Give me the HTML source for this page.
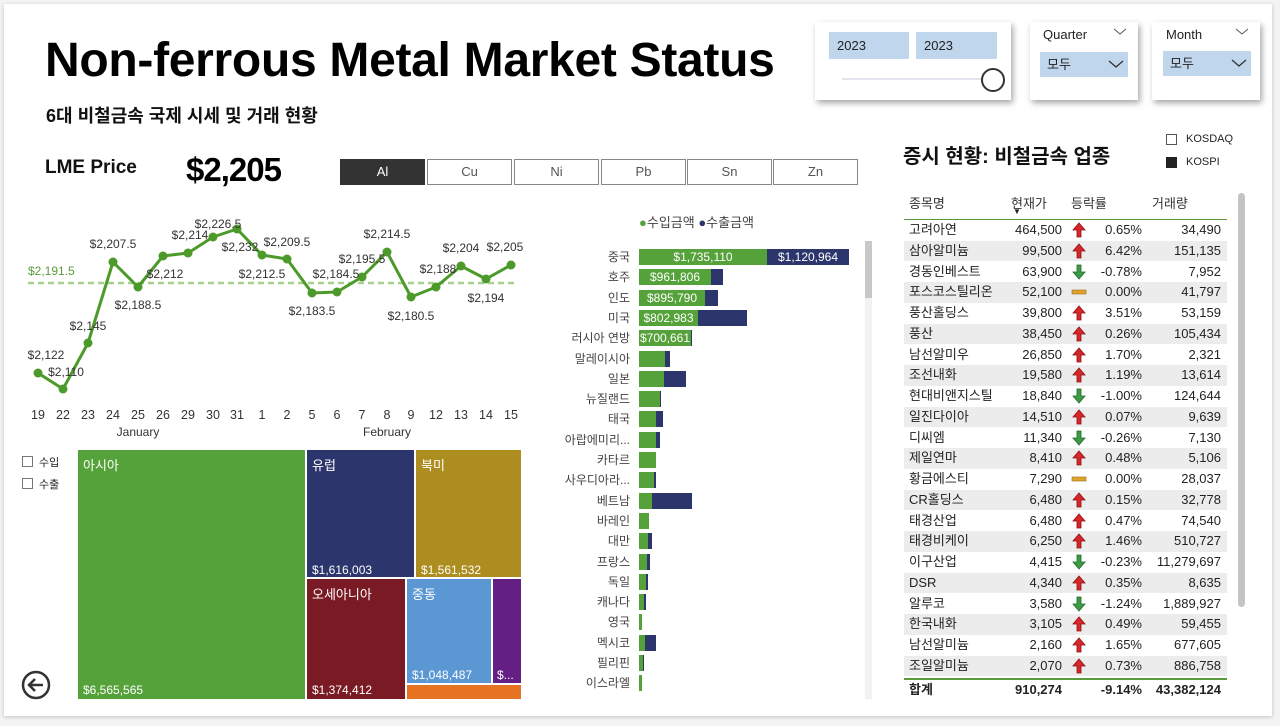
<!DOCTYPE html>
<html><head><meta charset="utf-8">
<style>
*{margin:0;padding:0;box-sizing:border-box}
body{width:1280px;height:726px;background:#f3f3f3;font-family:"Liberation Sans","Noto Sans CJK KR",sans-serif;position:relative;overflow:hidden;color:#222}
.a{position:absolute}
.card{left:4px;top:4px;width:1268px;height:712px;background:#fff;box-shadow:0 1px 4px rgba(0,0,0,.2)}
.btn{top:159px;height:26px;width:85px;border:1px solid #888;background:#fff;font-size:13px;color:#555;text-align:center;line-height:24px}
.sl{background:#fff;box-shadow:2px 3px 6px rgba(0,0,0,.35)}
.bl{font-size:12px;color:#444;text-align:right;width:120px;left:510px;line-height:16px}
.tr{left:904px;width:323px;height:20.7px;font-size:13px;color:#222}
.tr span{position:absolute;top:0;line-height:20px;height:20px}
.tm{color:#fff;font-size:13px}
</style></head><body>
<div class="a card"></div>

<div class="a" style="left:45px;top:33px;font-size:48px;font-weight:bold;color:#000;letter-spacing:-0.3px;white-space:nowrap">Non-ferrous Metal Market Status</div>
<div class="a" style="left:46px;top:102px;font-size:18px;font-weight:bold;color:#111">6대 비철금속 국제 시세 및 거래 현황</div>
<div class="a" style="left:45px;top:157px;font-size:19px;font-weight:bold;color:#111">LME Price</div>
<div class="a" style="left:186px;top:151px;font-size:33px;font-weight:bold;color:#000;letter-spacing:-1px">$2,205</div>

<div class="a btn" style="left:340px;background:#333;color:#fff;border-color:#333">Al</div>
<div class="a btn" style="left:427px">Cu</div>
<div class="a btn" style="left:514px">Ni</div>
<div class="a btn" style="left:601px">Pb</div>
<div class="a btn" style="left:687px">Sn</div>
<div class="a btn" style="left:773px">Zn</div>

<!-- slicers -->
<div class="a sl" style="left:815px;top:22px;width:196px;height:78px"></div>
<div class="a" style="left:829px;top:32px;width:80px;height:27px;background:#c0d6ec;font-size:13px;line-height:27px;padding-left:8px">2023</div>
<div class="a" style="left:916px;top:32px;width:81px;height:27px;background:#c0d6ec;font-size:13px;line-height:27px;padding-left:8px">2023</div>
<div class="a" style="left:842px;top:78px;width:140px;height:2px;background:#e4e4f0"></div>
<div class="a" style="left:981px;top:68px;width:24px;height:24px;border:2px solid #333;border-radius:50%;background:#fff"></div>

<div class="a sl" style="left:1030px;top:22px;width:108px;height:78px"></div>
<div class="a" style="left:1043px;top:27px;font-size:13px">Quarter</div>
<svg class="a" style="left:1113px;top:28px" width="14" height="8"><path d="M1 1l6 5 6-5" fill="none" stroke="#555" stroke-width="1"/></svg>
<div class="a" style="left:1040px;top:52px;width:88px;height:25px;background:#c0d6ec;font-size:13px;line-height:25px;padding-left:7px">모두</div>
<svg class="a" style="left:1108px;top:60px" width="16" height="9"><path d="M1 1l7 6 7-6" fill="none" stroke="#333" stroke-width="1.3"/></svg>

<div class="a sl" style="left:1152px;top:22px;width:108px;height:78px"></div>
<div class="a" style="left:1166px;top:27px;font-size:13px">Month</div>
<svg class="a" style="left:1235px;top:28px" width="14" height="8"><path d="M1 1l6 5 6-5" fill="none" stroke="#555" stroke-width="1"/></svg>
<div class="a" style="left:1163px;top:51px;width:88px;height:25px;background:#c0d6ec;font-size:13px;line-height:25px;padding-left:7px">모두</div>
<svg class="a" style="left:1231px;top:59px" width="16" height="9"><path d="M1 1l7 6 7-6" fill="none" stroke="#333" stroke-width="1.3"/></svg>

<!-- line chart -->
<svg class="a" style="left:0;top:190px" width="540" height="260" viewBox="0 190 540 260" font-family="Liberation Sans, sans-serif" font-size="12" fill="#333">
<line x1="28" y1="283" x2="518" y2="283" stroke="#a8d08d" stroke-width="2.5" stroke-dasharray="6,4"/>
<text x="28" y="275" fill="#5a9a3a">$2,191.5</text>
<polyline fill="none" stroke="#4c9a2a" stroke-width="3" stroke-linejoin="round" points="38,373 63,389 88,343 113,262 138,287 163,256 188,253 213,237 237,229 262,255 287,259 312,293 337,292 362,277 387,252 411,297 436,287 461,266 486,279 511,265"/>
<g fill="#4c9a2a">
<circle cx="38" cy="373" r="4.5"/><circle cx="63" cy="389" r="4.5"/><circle cx="88" cy="343" r="4.5"/><circle cx="113" cy="262" r="4.5"/><circle cx="138" cy="287" r="4.5"/><circle cx="163" cy="256" r="4.5"/><circle cx="188" cy="253" r="4.5"/><circle cx="213" cy="237" r="4.5"/><circle cx="237" cy="229" r="4.5"/><circle cx="262" cy="255" r="4.5"/><circle cx="287" cy="259" r="4.5"/><circle cx="312" cy="293" r="4.5"/><circle cx="337" cy="292" r="4.5"/><circle cx="362" cy="277" r="4.5"/><circle cx="387" cy="252" r="4.5"/><circle cx="411" cy="297" r="4.5"/><circle cx="436" cy="287" r="4.5"/><circle cx="461" cy="266" r="4.5"/><circle cx="486" cy="279" r="4.5"/><circle cx="511" cy="265" r="4.5"/>
</g>
<g text-anchor="middle">
<text x="46" y="359">$2,122</text><text x="66" y="376">$2,110</text><text x="88" y="330">$2,145</text><text x="113" y="248">$2,207.5</text><text x="138" y="309">$2,188.5</text><text x="165" y="278">$2,212</text><text x="190" y="239">$2,214</text><text x="218" y="228">$2,226.5</text><text x="240" y="251">$2,232</text><text x="262" y="278">$2,212.5</text><text x="287" y="246">$2,209.5</text><text x="312" y="315">$2,183.5</text><text x="336" y="278">$2,184.5</text><text x="362" y="263">$2,195.5</text><text x="387" y="238">$2,214.5</text><text x="411" y="320">$2,180.5</text><text x="438" y="273">$2,188</text><text x="461" y="252">$2,204</text><text x="486" y="302">$2,194</text><text x="505" y="251">$2,205</text>
</g>
<g text-anchor="middle" font-size="12.5">
<text x="38" y="419">19</text><text x="63" y="419">22</text><text x="88" y="419">23</text><text x="113" y="419">24</text><text x="138" y="419">25</text><text x="163" y="419">26</text><text x="188" y="419">29</text><text x="213" y="419">30</text><text x="237" y="419">31</text><text x="262" y="419">1</text><text x="287" y="419">2</text><text x="312" y="419">5</text><text x="337" y="419">6</text><text x="362" y="419">7</text><text x="387" y="419">8</text><text x="411" y="419">9</text><text x="436" y="419">12</text><text x="461" y="419">13</text><text x="486" y="419">14</text><text x="511" y="419">15</text>
<text x="138" y="436" font-size="12">January</text><text x="387" y="436" font-size="12">February</text>
</g>
</svg>

<!-- treemap -->
<div class="a" style="left:22px;top:456px;width:11px;height:11px;border:1px solid #777"></div>
<div class="a" style="left:39px;top:454px;font-size:11px">수입</div>
<div class="a" style="left:22px;top:478px;width:11px;height:11px;border:1px solid #777"></div>
<div class="a" style="left:39px;top:476px;font-size:11px">수출</div>
<div class="a" style="left:78px;top:450px;width:227px;height:249px;background:#56a23a"></div>
<div class="a tm" style="left:83px;top:455px">아시아</div><div class="a tm" style="left:83px;top:683px;font-size:12px">$6,565,565</div>
<div class="a" style="left:307px;top:450px;width:107px;height:127px;background:#2c366c"></div>
<div class="a tm" style="left:312px;top:455px">유럽</div><div class="a tm" style="left:312px;top:563px;font-size:12px">$1,616,003</div>
<div class="a" style="left:416px;top:450px;width:105px;height:127px;background:#ad8d1f"></div>
<div class="a tm" style="left:421px;top:455px">북미</div><div class="a tm" style="left:421px;top:563px;font-size:12px">$1,561,532</div>
<div class="a" style="left:307px;top:579px;width:98px;height:120px;background:#7a1a24"></div>
<div class="a tm" style="left:312px;top:584px">오세아니아</div><div class="a tm" style="left:312px;top:683px;font-size:12px">$1,374,412</div>
<div class="a" style="left:407px;top:579px;width:84px;height:104px;background:#5b97d2"></div>
<div class="a tm" style="left:412px;top:584px">중동</div><div class="a tm" style="left:412px;top:668px;font-size:12px">$1,048,487</div>
<div class="a" style="left:493px;top:579px;width:28px;height:104px;background:#631f84"></div>
<div class="a tm" style="left:497px;top:668px;font-size:12px">$...</div>
<div class="a" style="left:407px;top:685px;width:114px;height:14px;background:#e57321"></div>
<svg class="a" style="left:21px;top:670px" width="30" height="30"><circle cx="15" cy="15" r="13" fill="none" stroke="#333" stroke-width="2.5"/><path d="M22 15H9M14 9l-6 6 6 6" fill="none" stroke="#333" stroke-width="2.5"/></svg>

<!-- bar chart -->
<div class="a" style="left:639px;top:212px;font-size:13px;color:#444"><span style="color:#56a23a">●</span>수입금액 <span style="color:#2c366c">●</span>수출금액</div>
<div class="a" style="left:865px;top:241px;width:7px;height:458px;background:#f2f2f2"></div>
<div class="a" style="left:865px;top:241px;width:7px;height:57px;background:#c8c8c8"></div>
<div id="bars"></div>

<!-- right: table -->
<div class="a" style="left:903px;top:140px;font-size:20px;font-weight:bold;color:#111">증시 현황: 비철금속 업종</div>
<div class="a" style="left:1166px;top:134px;width:11px;height:11px;border:1px solid #555"></div>
<div class="a" style="left:1186px;top:133px;font-size:11px">KOSDAQ</div>
<div class="a" style="left:1166px;top:157px;width:11px;height:11px;background:#222"></div>
<div class="a" style="left:1186px;top:156px;font-size:11px">KOSPI</div>
<div class="a" style="left:909px;top:193px;font-size:13px;color:#333">종목명</div>
<div class="a" style="left:1011px;top:193px;font-size:13px;color:#333">현재가</div>
<div class="a" style="left:1013px;top:207px;font-size:8px">▼</div>
<div class="a" style="left:1071px;top:193px;font-size:13px;color:#333">등락률</div>
<div class="a" style="left:1152px;top:193px;font-size:13px;color:#333">거래량</div>
<div class="a" style="left:904px;top:219px;width:323px;height:1.5px;background:#5a9a3a"></div>
<div id="tbl"></div>
<div class="a" style="left:904px;top:678px;width:323px;height:1.5px;background:#5a9a3a"></div>
<div class="a" style="left:909px;top:682px;font-size:13px;font-weight:bold;line-height:16px">합계</div>
<div class="a" style="left:980px;width:82px;text-align:right;top:682px;font-size:13px;font-weight:bold;line-height:16px">910,274</div>
<div class="a" style="left:1080px;width:62px;text-align:right;top:682px;font-size:13px;font-weight:bold;line-height:16px">-9.14%</div>
<div class="a" style="left:1140px;width:81px;text-align:right;top:682px;font-size:13px;font-weight:bold;line-height:16px">43,382,124</div>
<div class="a" style="left:1238px;top:193px;width:7px;height:414px;background:#c4c4c4;border-radius:4px"></div>

<script>
var B=[["중국",128,82,"$1,735,110","$1,120,964"],["호주",72,12,"$961,806"],["인도",66,13,"$895,790"],["미국",59,49,"$802,983"],["러시아 연방",52,1,"$700,661"],["말레이시아",26,5],["일본",25,22],["뉴질랜드",21,1],["태국",17,7],["아랍에미리...",17,4],["카타르",17,0],["사우디아라...",15,2],["베트남",13,40],["바레인",10,0],["대만",9,4],["프랑스",8,3],["독일",7,2],["캐나다",5,2],["영국",3,0],["멕시코",6,11],["필리핀",4,1],["이스라엘",3,0]];
var h="";B.forEach(function(b,i){var y=249+i*20.3;
h+='<div class="a bl" style="top:'+y+'px">'+b[0]+'</div>';
h+='<div class="a" style="left:639px;top:'+y+'px;width:'+b[1]+'px;height:16px;background:#56a23a;color:#fff;font-size:12px;text-align:center;line-height:16px">'+(b[3]||'')+'</div>';
if(b[2])h+='<div class="a" style="left:'+(639+b[1])+'px;top:'+y+'px;width:'+b[2]+'px;height:16px;background:#2c366c;color:#fff;font-size:12px;text-align:center;line-height:16px">'+(b[4]||'')+'</div>';});
document.getElementById("bars").innerHTML=h;
var T=[["고려아연","464,500",1,"0.65%","34,490"],["삼아알미늄","99,500",1,"6.42%","151,135"],["경동인베스트","63,900",-1,"-0.78%","7,952"],["포스코스틸리온","52,100",0,"0.00%","41,797"],["풍산홀딩스","39,800",1,"3.51%","53,159"],["풍산","38,450",1,"0.26%","105,434"],["남선알미우","26,850",1,"1.70%","2,321"],["조선내화","19,580",1,"1.19%","13,614"],["현대비앤지스틸","18,840",-1,"-1.00%","124,644"],["일진다이아","14,510",1,"0.07%","9,639"],["디씨엠","11,340",-1,"-0.26%","7,130"],["제일연마","8,410",1,"0.48%","5,106"],["황금에스티","7,290",0,"0.00%","28,037"],["CR홀딩스","6,480",1,"0.15%","32,778"],["태경산업","6,480",1,"0.47%","74,540"],["태경비케이","6,250",1,"1.46%","510,727"],["이구산업","4,415",-1,"-0.23%","11,279,697"],["DSR","4,340",1,"0.35%","8,635"],["알루코","3,580",-1,"-1.24%","1,889,927"],["한국내화","3,105",1,"0.49%","59,455"],["남선알미늄","2,160",1,"1.65%","677,605"],["조일알미늄","2,070",1,"0.73%","886,758"]];
var up='<svg width="16" height="16" style="margin-top:2px"><path d="M8 1L2 8h4v7h4V8h4z" fill="#d9262b" stroke="#8a1010" stroke-width=".8"/></svg>';
var dn='<svg width="16" height="16" style="margin-top:2px"><path d="M8 15L2 8h4V1h4v7h4z" fill="#3e9a45" stroke="#1f6a27" stroke-width=".8"/></svg>';
var fl='<svg width="16" height="16" style="margin-top:2px"><rect x="1" y="6" width="14" height="4" fill="#e0a330" stroke="#9a6c10" stroke-width=".6"/></svg>';
h="";T.forEach(function(r,i){var y=220+i*20.75;
h+='<div class="a tr" style="top:'+y+'px;background:'+(i%2?'#ececec':'#fff')+'"><span style="left:5px">'+r[0]+'</span><span style="left:76px;width:82px;text-align:right">'+r[1]+'</span><span style="left:167px">'+(r[2]>0?up:r[2]<0?dn:fl)+'</span><span style="left:176px;width:62px;text-align:right">'+r[3]+'</span><span style="left:236px;width:81px;text-align:right">'+r[4]+'</span></div>';});
document.getElementById("tbl").innerHTML=h;
</script>
</body></html>
